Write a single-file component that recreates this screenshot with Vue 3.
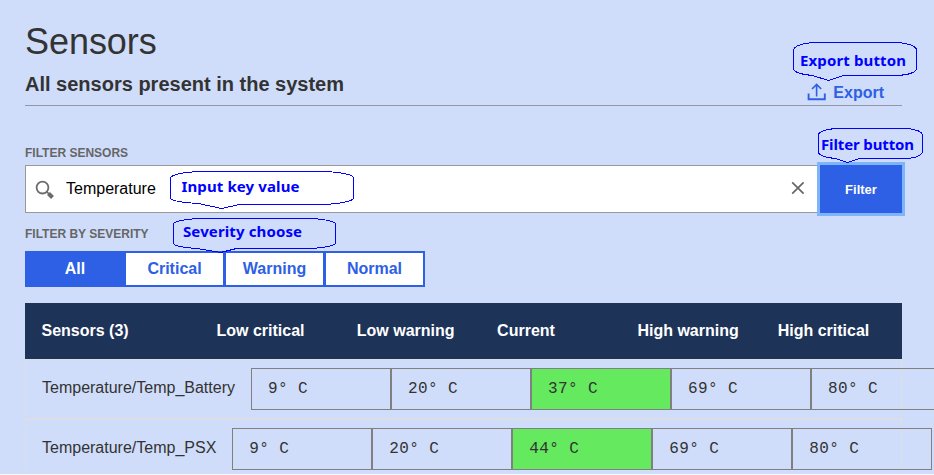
<script setup>
import { ref } from 'vue'

const query = ref('Temperature')
const active = ref('All')
const severities = ['All', 'Critical', 'Warning', 'Normal']
const columns = ['Low critical', 'Low warning', 'Current', 'High warning', 'High critical']
const sensors = [
  { name: 'Temperature/Temp_Battery', values: [9, 20, 37, 69, 80] },
  { name: 'Temperature/Temp_PSX', values: [9, 20, 44, 69, 80] },
]
</script>

<template>
  <main class="page">
    <h1 class="title">Sensors</h1>
    <header class="subhead">
      <h2>All sensors present in the system</h2>
      <a class="export">
        <svg width="20" height="18" viewBox="0 0 20 18" fill="none" stroke="#2d60e5">
          <path d="M1.6 10.500v5.700h16.200v-5.700" stroke-width="1.9" />
          <path d="M9.600 13.500V1.600M5 6 9.600 1.400 14.200 6" stroke-width="1.6" />
        </svg>
        <span>Export</span>
      </a>
    </header>

    <label class="label filter-label">FILTER SENSORS</label>
    <div class="search">
      <div class="field">
        <svg class="lens" width="20" height="20" viewBox="0 0 20 20" fill="none" stroke="#6b6b6b">
          <circle cx="7.500" cy="7.600" r="5.900" stroke-width="1.800" />
          <path d="M11.900 11.900l2 2" stroke-width="1.500" />
          <path d="M13.500 13.500l4 4" stroke-width="4" />
        </svg>
        <span class="query">{{ query }}</span>
        <svg class="clear" width="14" height="14" viewBox="0 0 14 14" stroke="#666" stroke-width="1.7">
          <path d="M1.200 1.400l11.400 11.200M12.600 1.400L1.200 12.600" />
        </svg>
      </div>
      <button class="submit">Filter</button>
    </div>

    <label class="label severity-label">FILTER BY SEVERITY</label>
    <div class="severity">
      <button v-for="s in severities" :key="s" :class="{ on: s === active }" @click="active = s">{{ s }}</button>
    </div>

    <section class="table">
      <div class="thead">
        <div class="name">Sensors (3)</div>
        <div v-for="c in columns" :key="c" class="col">{{ c }}</div>
      </div>
      <div v-for="row in sensors" :key="row.name" class="row">
        <div class="sensor">{{ row.name }}</div>
        <div v-for="(v, i) in row.values" :key="i" class="cell" :class="{ current: i === 2 }">{{ v }}° C</div>
      </div>
    </section>

    <svg class="notes" width="934" height="475" viewBox="0 0 934 475">
      <g fill="none" stroke="#0000ff" stroke-width="1" shape-rendering="crispEdges">
        <path d="M813.5 42.5H897.5Q914.5 44 916.5 49.5V69.5Q914 74.5 897.5 75.5H843.5L828.5 80.5L812.5 75.5Q796 74 793.5 69.5V49.5Q796 44 813.5 42.5Z" />
        <path d="M835.5 128.5H907.5Q921 130 922.5 134.5V152.5Q920 157.5 907.5 158.5H859.5L847.5 162.5L835.5 158.5Q820 157 818.5 152.5V134.5Q820 130 835.5 128.5Z" />
        <path d="M198.5 171.5H325.5Q351 173 353.5 177.5V198.5Q350 203 324.5 204.5H239.5L221.5 208.5L198.5 203.5Q173 202 170.5 198.5V177.5Q174 173 198.5 171.5Z" />
        <path d="M198.5 218.5H311.5Q333 220 335.5 223.5V243.5Q333 247 311.5 248.5H236.5L220.5 252.5L197.5 248.5Q175 247 173.5 243.5V223.5Q176 220 198.5 218.5Z" />
      </g>
      <g class="note-text">
        <text x="800" y="66" textLength="106">Export button</text>
        <text x="821" y="150" textLength="93">Filter button</text>
        <text x="181.5" y="192" textLength="118">Input key value</text>
        <text x="183" y="237" textLength="119">Severity choose</text>
      </g>
    </svg>
  </main>
</template>

<style>
body {
  background: #cfddfa;
  overflow: hidden;
}
</style>

<style scoped>
* {
  box-sizing: border-box;
}
.page {
  position: relative;
  width: 934px;
  height: 475px;
  padding: 0 32px 0 25px;
  overflow: hidden;
  border-bottom: 1px solid #f5f8ff;
  background: #cfddfa;
  color: #333;
  font-family: "Liberation Sans", Arial, sans-serif;
}
.title {
  margin: 0;
  padding-top: 20px;
  height: 68px;
  font-size: 36px;
  line-height: 44px;
  font-weight: 400;
  letter-spacing: -0.05px;
}
.subhead {
  display: flex;
  justify-content: space-between;
  height: 38px;
  border-bottom: 1px solid #9297a3;
}
.subhead h2 {
  margin: 0;
  padding-top: 4px;
  font-size: 20px;
  line-height: 24px;
  font-weight: 700;
}
.export {
  display: flex;
  gap: 6px;
  padding: 15px 18px 0 0;
  color: #2d60e5;
  font-size: 16px;
  line-height: 19px;
  font-weight: 700;
}
.label {
  display: block;
  color: #666;
  font-size: 12px;
  line-height: 14px;
  font-weight: 700;
}
.filter-label {
  margin: 40px 0 5px;
}
.search {
  display: flex;
  height: 48px;
}
.field {
  display: flex;
  align-items: center;
  width: 795px;
  padding: 0 15px 0 9px;
  border: 1px solid #999;
  border-right: 0;
  background: #fff;
}
.lens {
  margin-top: 2px;
}
.query {
  flex: 1;
  margin: 0 0 0 11px;
  color: #000;
  font-size: 16px;
}
.clear {
  margin-top: -3px;
}
.submit {
  width: 82px;
  padding: 0;
  border: 0;
  background: #2d60e5;
  box-shadow: 0 0 0 3px #7eb4fc;
  color: #fff;
  font: 700 13px "Liberation Sans", Arial, sans-serif;
}
.severity-label {
  margin: 14px 0 10px;
}
.severity {
  display: grid;
  grid-template-columns: repeat(4, 100px);
  width: 400px;
  height: 36px;
}
.severity button {
  padding: 0 0 1px;
  border: 2px solid #2d60e5;
  border-left-width: 1px;
  background: #fff;
  color: #2d60e5;
  font: 700 16px "Liberation Sans", Arial, sans-serif;
}
.severity button:first-child {
  border-left-width: 2px;
}
.severity .on {
  background: #2d60e5;
  color: #fff;
}
.table {
  margin-top: 16px;
  width: 877px;
}
.thead {
  display: flex;
  align-items: center;
  height: 56px;
  padding: 0 0 1px 16.5px;
  background: #1e3358;
  color: #fff;
  font-size: 16px;
  font-weight: 700;
}
.name {
  flex: none;
  width: 175px;
}
.col {
  flex: none;
  width: 140.3px;
}
.row {
  display: flex;
  height: 60px;
  padding: 8px 0 0 16px;
  border: 1px solid #dbdfe4;
}
.sensor {
  flex: none;
  padding: 10px 16px 0 0;
  font-size: 16px;
  line-height: 20px;
}
.cell {
  flex: none;
  width: 140px;
  height: 42px;
  padding: 10px 16px 0;
  border: 1px solid #808080;
  font-family: "Liberation Mono", "Courier New", monospace;
  font-size: 16px;
  line-height: 20px;
  letter-spacing: 0.4px;
}
.current {
  background: #64e95f;
}
.notes {
  position: absolute;
  top: 0;
  left: 0;
  pointer-events: none;
}
.note-text {
  fill: #0000ff;
  font: 700 15px "Noto Sans", "Open Sans", sans-serif;
}
</style>
